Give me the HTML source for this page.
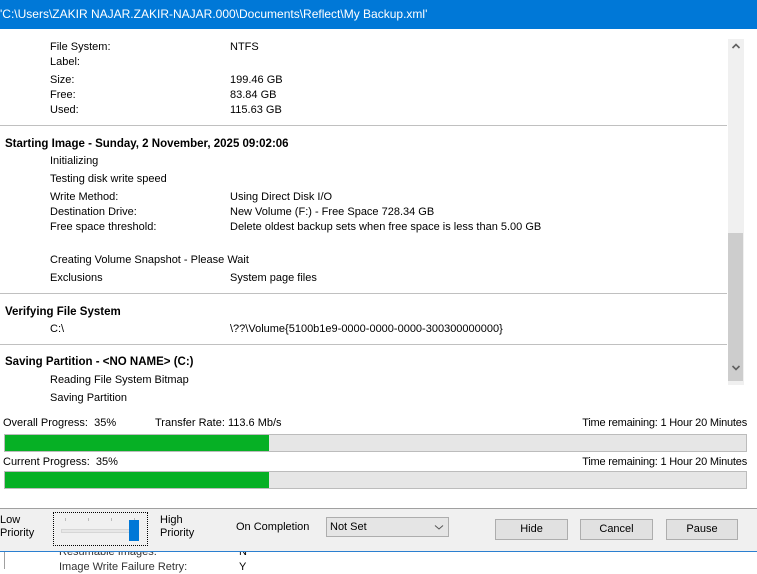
<!DOCTYPE html>
<html><head><meta charset="utf-8"><style>
*{margin:0;padding:0;box-sizing:border-box}
body{width:757px;height:569px;overflow:hidden;background:#fff;font-family:"Liberation Sans",sans-serif;font-size:11px;color:#000;position:relative}
.t{position:absolute;line-height:14px;white-space:nowrap}
.r{position:absolute;line-height:14px;white-space:nowrap;right:10px}
.b{font-weight:bold;font-size:11.5px}
.hr{position:absolute;left:0;width:727px;height:1px;background:#c0c0c0}
.bar{position:absolute;left:4px;width:743px;height:18px;background:#e6e6e6;border:1px solid #bcbcbc}
.bar i{position:absolute;left:0;top:0;bottom:0;width:264px;background:#06b025}
.btn{position:absolute;top:519px;height:21px;border:1px solid #adadad;background:#e1e1e1;text-align:center;line-height:19px;font-size:11px}
.tb{position:absolute;left:0;top:509px;width:757px;height:42px;background:#f0f0f0;z-index:2}
.tb .t{z-index:3}
</style></head><body>
<div style="position:absolute;left:0;top:0;width:757px;height:29px;background:#0078d7"></div>
<div class="t" style="left:0;top:7px;color:#fff;font-size:12px">'C:\Users\ZAKIR NAJAR.ZAKIR-NAJAR.000\Documents\Reflect\My Backup.xml'</div>

<div style="position:absolute;left:728px;top:39px;width:16px;height:346px;background:#f0f0f0"></div>
<div style="position:absolute;left:728px;top:233px;width:15px;height:148px;background:#cdcdcd"></div>
<svg style="position:absolute;left:731px;top:42px" width="10" height="8"><path d="M1.5 6 L5 2.5 L8.5 6" stroke="#606060" stroke-width="1.6" fill="none"/></svg>
<svg style="position:absolute;left:731px;top:364px" width="10" height="8"><path d="M1.5 2 L5 5.5 L8.5 2" stroke="#606060" stroke-width="1.6" fill="none"/></svg>

<div class="t" style="left:50px;top:40px">File System:</div><div class="t" style="left:230px;top:40px">NTFS</div>
<div class="t" style="left:50px;top:55px">Label:</div>
<div class="t" style="left:50px;top:73px">Size:</div><div class="t" style="left:230px;top:73px">199.46 GB</div>
<div class="t" style="left:50px;top:88px">Free:</div><div class="t" style="left:230px;top:88px">83.84 GB</div>
<div class="t" style="left:50px;top:103px">Used:</div><div class="t" style="left:230px;top:103px">115.63 GB</div>
<div class="hr" style="top:125px"></div>
<div class="t b" style="left:5px;top:137px">Starting Image - Sunday, 2 November, 2025 09:02:06</div>
<div class="t" style="left:50px;top:154px">Initializing</div>
<div class="t" style="left:50px;top:172px">Testing disk write speed</div>
<div class="t" style="left:50px;top:190px">Write Method:</div><div class="t" style="left:230px;top:190px">Using Direct Disk I/O</div>
<div class="t" style="left:50px;top:205px">Destination Drive:</div><div class="t" style="left:230px;top:205px">New Volume (F:) - Free Space 728.34 GB</div>
<div class="t" style="left:50px;top:220px">Free space threshold:</div><div class="t" style="left:230px;top:220px">Delete oldest backup sets when free space is less than 5.00 GB</div>
<div class="t" style="left:50px;top:253px">Creating Volume Snapshot - Please Wait</div>
<div class="t" style="left:50px;top:271px">Exclusions</div><div class="t" style="left:230px;top:271px">System page files</div>
<div class="hr" style="top:293px"></div>
<div class="t b" style="left:5px;top:305px">Verifying File System</div>
<div class="t" style="left:50px;top:322px">C:\</div><div class="t" style="left:230px;top:322px">\??\Volume{5100b1e9-0000-0000-0000-300300000000}</div>
<div class="hr" style="top:344px"></div>
<div class="t b" style="left:5px;top:355px">Saving Partition - &lt;NO NAME&gt; (C:)</div>
<div class="t" style="left:50px;top:373px">Reading File System Bitmap</div>
<div class="t" style="left:50px;top:391px">Saving Partition</div>

<div class="t" style="left:3px;top:416px">Overall Progress:&nbsp; 35%</div>
<div class="t" style="left:155px;top:416px">Transfer Rate: 113.6 Mb/s</div>
<div class="r" style="right:10px;top:416px;letter-spacing:-0.2px">Time remaining: 1 Hour 20 Minutes</div>
<div class="bar" style="top:434px"><i></i></div>
<div class="t" style="left:3px;top:455px">Current Progress:&nbsp; 35%</div>
<div class="r" style="right:10px;top:455px;letter-spacing:-0.2px">Time remaining: 1 Hour 20 Minutes</div>
<div class="bar" style="top:471px"><i></i></div>

<div class="t" style="left:59px;top:545px;color:#333">Resumable Images:</div><div class="t" style="left:239px;top:545px">N</div>
<div class="t" style="left:59px;top:560px;color:#333">Image Write Failure Retry:</div><div class="t" style="left:239px;top:560px">Y</div>
<div style="position:absolute;left:4px;top:552px;width:1px;height:17px;background:#a0a0a0"></div>

<div style="position:absolute;left:0;top:508px;width:757px;height:1px;background:#a0a0a0;z-index:2"></div>
<div class="tb">
 <div class="t" style="left:0;top:5px;line-height:13px">Low<br>Priority</div>
 <div style="position:absolute;left:53px;top:3px;width:95px;height:34px;border:1px dotted #000"></div>
 <div style="position:absolute;left:61px;top:20px;width:78px;height:4px;background:#e7e7e7;border:1px solid #d6d6d6"></div>
 <div style="position:absolute;left:65px;top:9px;width:1px;height:3px;background:#bbb"></div>
 <div style="position:absolute;left:88px;top:9px;width:1px;height:3px;background:#bbb"></div>
 <div style="position:absolute;left:111px;top:9px;width:1px;height:3px;background:#bbb"></div>
 <div style="position:absolute;left:134px;top:9px;width:1px;height:3px;background:#bbb"></div>
 <div style="position:absolute;left:129px;top:11px;width:10px;height:21px;background:#0078d7"></div>
 <div class="t" style="left:160px;top:5px;line-height:13px">High<br>Priority</div>
 <div class="t" style="left:236px;top:11px">On Completion</div>
 <div style="position:absolute;left:326px;top:8px;width:123px;height:20px;border:1px solid #adadad;background:#e5e5e5"></div>
 <div class="t" style="left:330px;top:11px">Not Set</div>
 <svg style="position:absolute;left:434px;top:15px" width="10" height="7"><path d="M1 1.5 L5 5 L9 1.5" stroke="#555" stroke-width="1" fill="none"/></svg>
</div>
<div class="btn" style="left:495px;width:73px;z-index:3">Hide</div>
<div class="btn" style="left:580px;width:73px;z-index:3">Cancel</div>
<div class="btn" style="left:666px;width:72px;z-index:3">Pause</div>
<div style="position:absolute;left:0;top:551px;width:757px;height:1px;background:#2b7fd0;z-index:3"></div>
</body></html>
